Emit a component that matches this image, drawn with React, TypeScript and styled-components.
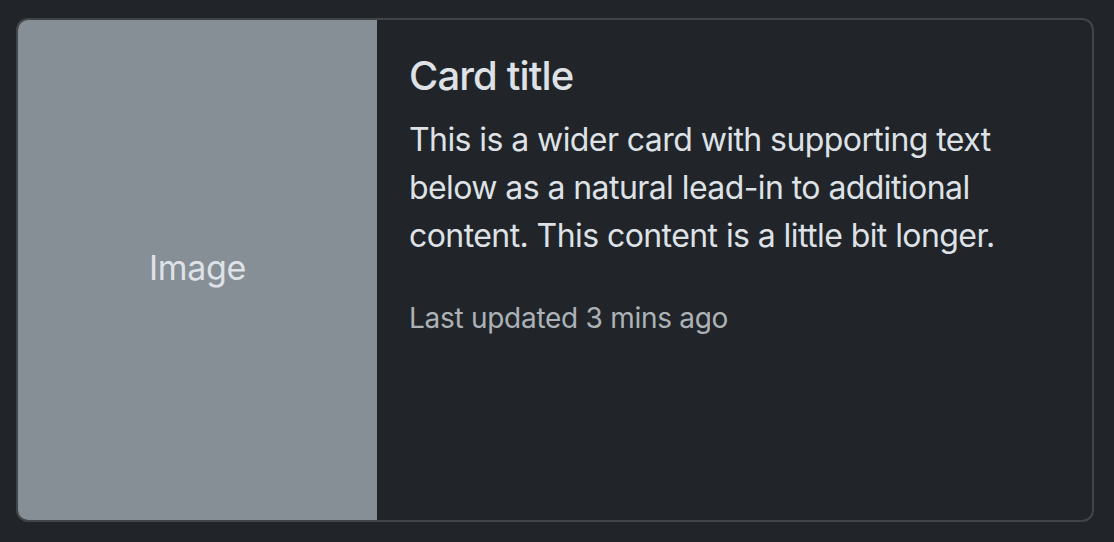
import React from "react";
import styled, { createGlobalStyle } from "styled-components";

const Global = createGlobalStyle`
  html, body { margin: 0; padding: 0; background: #212529; }
  body { font-family: Inter, "Liberation Sans", Arial, sans-serif; color: #dee2e6; }
`;

const Page = styled.div`
  padding: 18px 20px 0 16px;
`;

const Card = styled.div`
  width: 1078px;
  box-sizing: border-box;
  display: flex;
  border: 2px solid rgba(255, 255, 255, 0.15);
  border-radius: 12px;
  background: #212529;
`;

const Thumb = styled.div`
  flex: 0 0 359px;
  height: 500px;
  background: #868e96;
  border-radius: 10px 0 0 10px;
  display: flex;
  align-items: center;
  justify-content: center;
  color: #dee2e6;
  font-size: 34px;
  letter-spacing: -0.01em;
  padding-bottom: 6px;
  box-sizing: border-box;
`;

const Body = styled.div`
  flex: 1;
  padding: 32px;
`;

const Title = styled.h5`
  margin: 0 0 16px;
  font-size: 40px;
  font-weight: 500;
  line-height: 1.2;
  letter-spacing: -0.022em;
  color: #dee2e6;
`;

const Text = styled.p`
  margin: 0 0 37px;
  font-size: 32px;
  line-height: 1.5;
  letter-spacing: -0.018em;
  color: #dee2e6;
`;

const Muted = styled.small`
  display: block;
  font-size: 28px;
  line-height: 1.5;
  letter-spacing: -0.01em;
  color: rgba(222, 226, 230, 0.75);
`;

export default function App() {
  return (
    <>
      <Global />
      <Page>
        <Card>
          <Thumb>Image</Thumb>
          <Body>
            <Title>Card title</Title>
            <Text>
              This is a wider card with supporting text below as a natural lead-in to additional content. This content is a little bit longer.
            </Text>
            <Muted>Last updated 3 mins ago</Muted>
          </Body>
        </Card>
      </Page>
    </>
  );
}
